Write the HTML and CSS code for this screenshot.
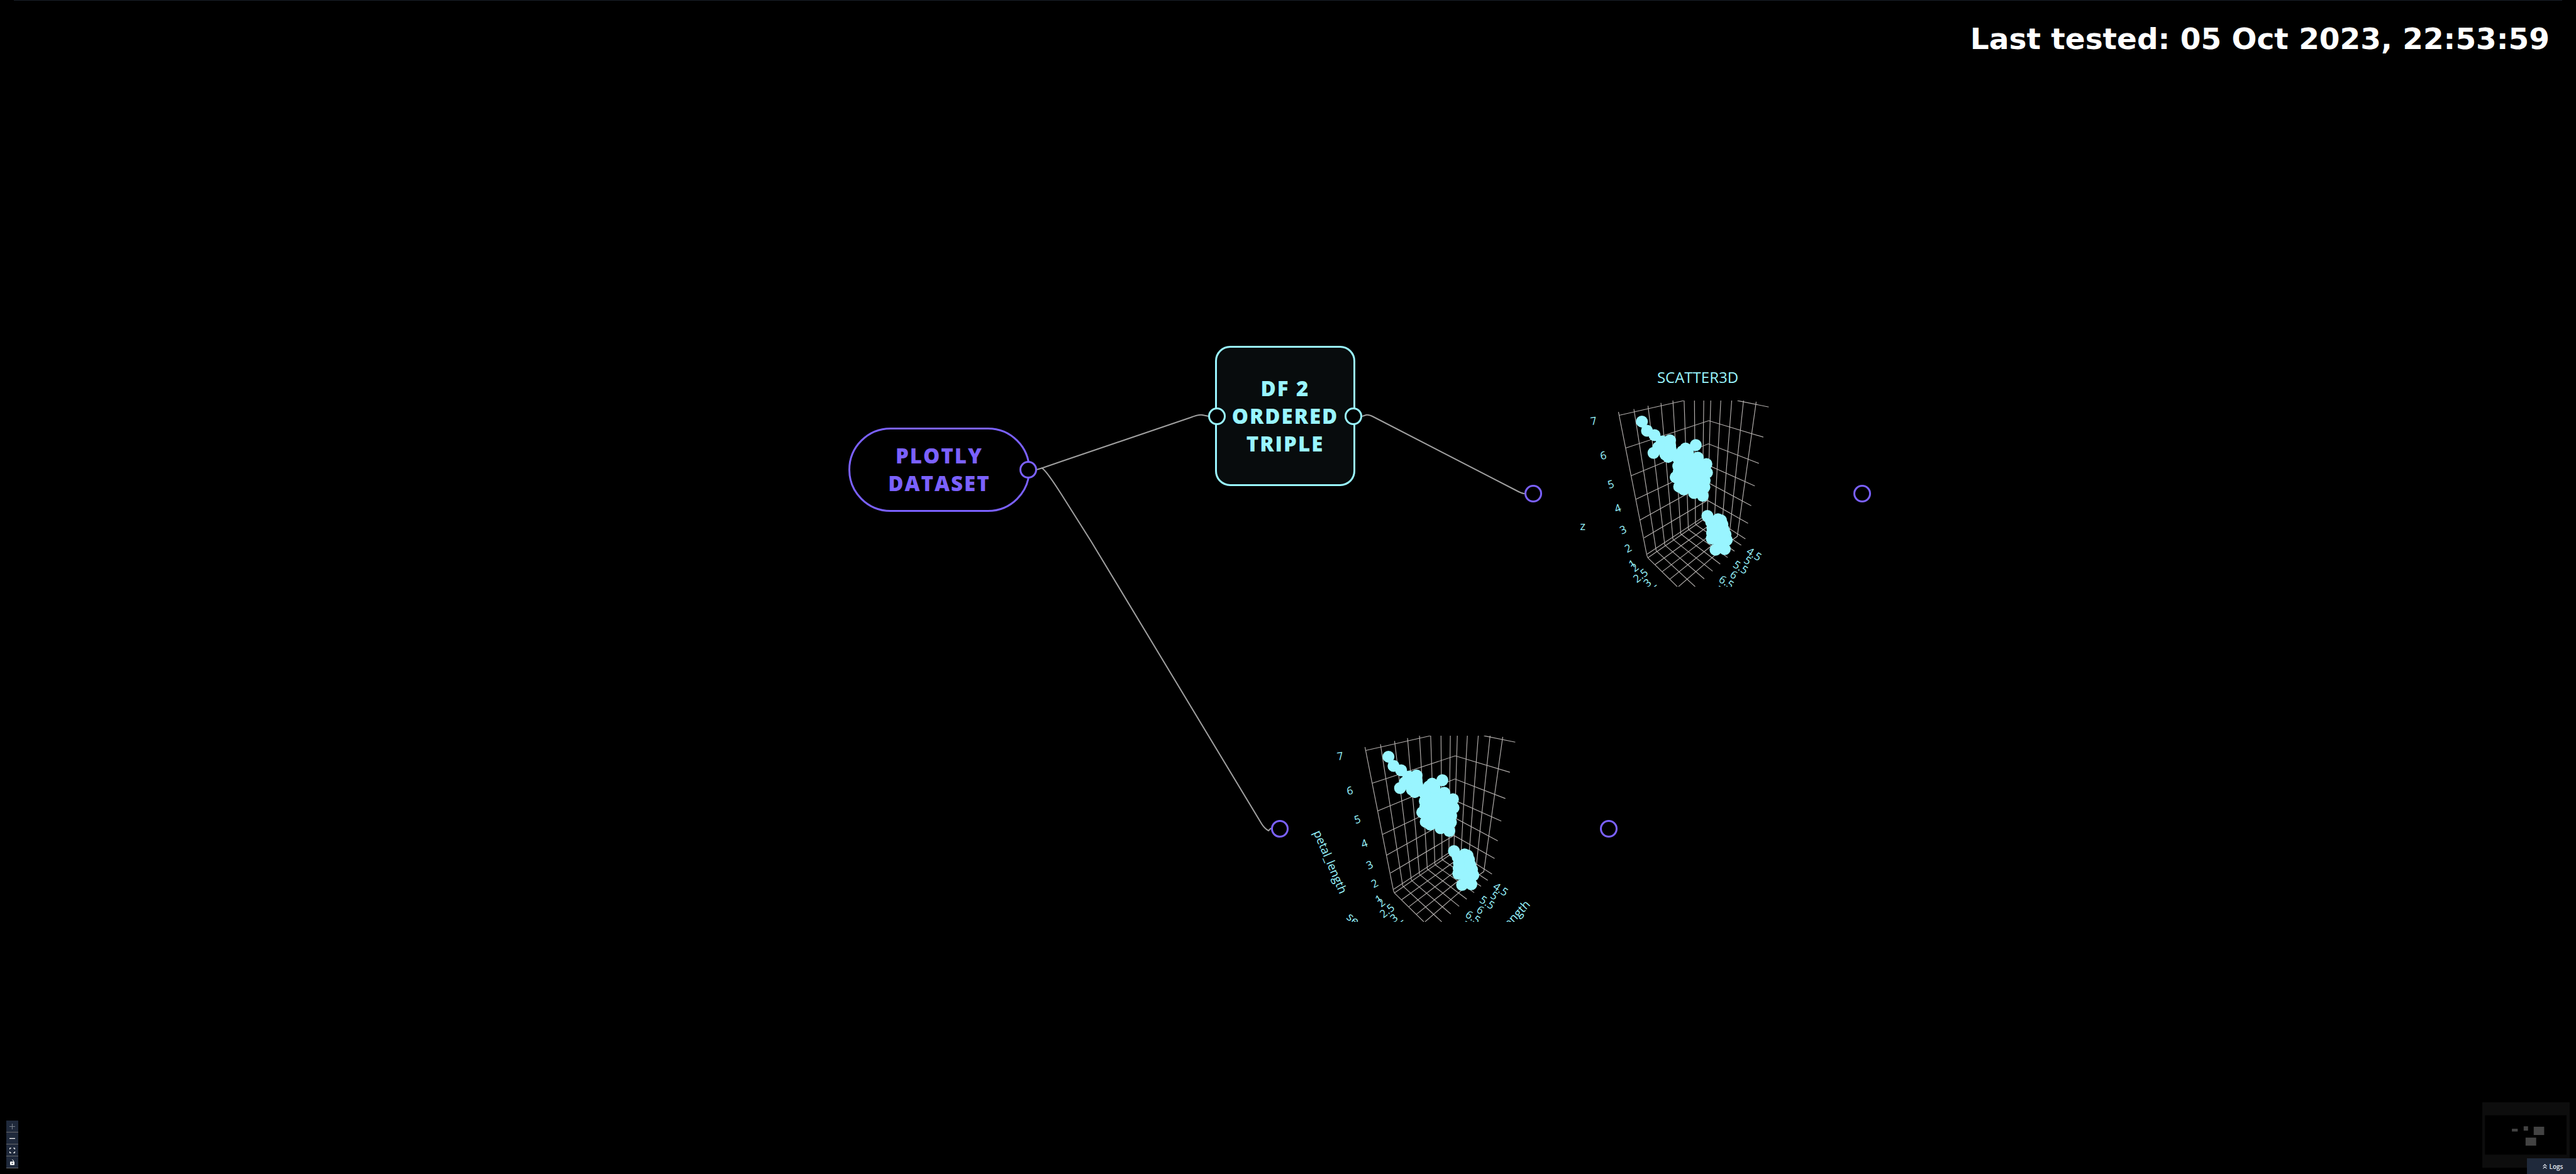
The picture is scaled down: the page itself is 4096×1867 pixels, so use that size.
FILE: index.html
```html
<!DOCTYPE html>
<html lang="en">
<head>
<meta charset="utf-8">
<title>Flow</title>
<link rel="stylesheet" href="styles.css">
</head>
<body>
<svg class="defs" aria-hidden="true">
  <defs>
    <g id="plot-grid">
      <!-- left wall -->
      <path d="M258 128L453 1112L460 1130M364 108L517 1080L523 1087M461 86L576 1040L583 1048M550 66L632 1000L638 1007M632 50L686 965L691 970M709 50L738 930L741 937M780 50L787 897L791 903M844 50L834 850"/>
      <!-- right wall -->
      <path d="M892 50L869 820M961 50L918 850M1036 50L973 860M1117 50L1023 940M1204 58L1074 983L1030 1014"/>
      <!-- height lines -->
      <path d="M262 151L709 50M1075 50L1290 94M308 376L878 188L1253 301M346 566L875 347L1222 481M378 728L873 493L1194 636M406 870L871 612L1170 772M434 992L869 735L1148 893M455 1105L867 832L1130 1000"/>
      <!-- floor -->
      <path d="M460 1130L662 1328M523 1087L785 1328M583 1048L847 1274M638 1007L905 1222M691 970L957 1173M741 937L1008 1128M791 903L1055 1084M840 873L1101 1043"/>
      <path d="M460 1130L864 852M510 1176L880 908M560 1224L880 980M612 1276L910 1037M670 1328L930 1104"/>
    </g>
    <g id="plot-points">
      <path d="M419 194L454 257L506 287L613 323L616 375L697 395L719 379L760 400L803 442L862 486L866 545L850 600L848 645L837 704L777 685L706 660L675 641L651 576L669 500L600 436L499 408L530 370L500 290Z"/>
      <path d="M869 842L942 865L965 873L980 920L993 965L1002 1008L988 1070L925 1075L899 996L900 950L895 895Z"/>
      <circle cx="419" cy="194" r="41"/><circle cx="454" cy="257" r="41"/><circle cx="506" cy="287" r="41"/>
      <circle cx="560" cy="331" r="41"/><circle cx="612" cy="323" r="41"/><circle cx="532" cy="370" r="41"/>
      <circle cx="499" cy="409" r="41"/><circle cx="580" cy="420" r="41"/><circle cx="600" cy="437" r="41"/>
      <circle cx="613" cy="360" r="41"/><circle cx="616" cy="382" r="41"/><circle cx="697" cy="398" r="41"/>
      <circle cx="719" cy="379" r="41"/><circle cx="789" cy="355" r="41"/><circle cx="735" cy="404" r="41"/>
      <circle cx="803" cy="442" r="41"/><circle cx="862" cy="486" r="41"/><circle cx="866" cy="545" r="41"/>
      <circle cx="850" cy="600" r="41"/><circle cx="848" cy="645" r="41"/><circle cx="837" cy="704" r="41"/>
      <circle cx="777" cy="685" r="41"/><circle cx="706" cy="660" r="41"/><circle cx="675" cy="641" r="41"/>
      <circle cx="651" cy="576" r="41"/><circle cx="672" cy="540" r="41"/><circle cx="669" cy="500" r="41"/>
      <circle cx="670" cy="450" r="41"/>
      <circle cx="869" cy="842" r="41"/><circle cx="942" cy="865" r="41"/><circle cx="962" cy="872" r="41"/>
      <circle cx="895" cy="885" r="41"/><circle cx="903" cy="925" r="41"/><circle cx="901" cy="960" r="41"/>
      <circle cx="899" cy="998" r="41"/><circle cx="972" cy="900" r="41"/><circle cx="980" cy="935" r="41"/>
      <circle cx="993" cy="968" r="41"/><circle cx="1002" cy="1008" r="41"/><circle cx="988" cy="1070" r="41"/>
      <circle cx="925" cy="1075" r="41"/>
    </g>
  </defs>
</svg>

<main class="flow">
  <header class="flow-header">
    <p class="last-tested">Last tested: 05 Oct 2023, 22:53:59</p>
  </header>

  <svg class="edges" aria-hidden="true">
    <path d="M1648 747L1658 744L1687 734L1893 664Q1906 659 1912 660L1922 662"/>
    <path d="M1656 744Q1662 746 1687 785L1735 861L2006 1310Q2011 1318 2017 1321L2021 1317"/>
    <path d="M2166 662L2172 660Q2176 659 2184 663L2409 779Q2420 785 2424 785"/>
  </svg>

  <section class="node node-source">
    <h2 class="node-label">PLOTLY<br>DATASET</h2>
    <span class="handle handle-out"></span>
  </section>

  <section class="node node-transform">
    <h2 class="node-label">DF 2<br>ORDERED<br>TRIPLE</h2>
    <span class="handle handle-in"></span>
    <span class="handle handle-out"></span>
  </section>

  <section class="node node-chart chart-titled">
    <h2 class="chart-title">SCATTER3D</h2>
    <svg class="plot" viewBox="-327 50 2259 1278" role="img" aria-label="Scatter3D plot">
      <use href="#plot-grid" class="grid"/>
      <use href="#plot-points" class="points"/>
      <g class="ticks">
        <text y="26" transform="translate(88 190) rotate(-10)">7</text>
        <text y="26" transform="translate(154 427) rotate(-12)">6</text>
        <text y="26" transform="translate(206 625) rotate(-16)">5</text>
        <text y="26" transform="translate(253 790) rotate(-20)">4</text>
        <text y="26" transform="translate(290 937) rotate(-24)">3</text>
        <text y="26" transform="translate(324 1064) rotate(-28)">2</text>
        <text y="26" transform="translate(352 1172) rotate(-32)">1</text>
        <text y="26" transform="translate(370 1197) rotate(-38)">2</text>
        <text y="26" transform="translate(410 1252) rotate(-38)">2.5</text>
        <text y="26" transform="translate(457 1302) rotate(-38)">3</text>
        <text y="26" transform="translate(500 1362) rotate(-38)">3.5</text>
        <text y="26" transform="translate(1190 1105) rotate(33)">4.5</text>
        <text y="26" transform="translate(1145 1148) rotate(33)">5</text>
        <text y="26" transform="translate(1097 1195) rotate(33)">5.5</text>
        <text y="26" transform="translate(1050 1247) rotate(33)">6</text>
        <text y="26" transform="translate(1000 1297) rotate(33)">6.5</text>
        <text y="26" transform="translate(950 1352) rotate(33)">7</text>
      </g>
      <g class="axis-titles">
        <text y="21" transform="translate(13 919)">z</text>
      </g>
    </svg>
    <span class="handle handle-in"></span>
    <span class="handle handle-out"></span>
  </section>

  <section class="node node-chart chart-plain">
    <svg class="plot" viewBox="-327 50 2259 1278" role="img" aria-label="Iris plot">
      <use href="#plot-grid" class="grid"/>
      <use href="#plot-points" class="points"/>
      <g class="ticks">
        <text y="26" transform="translate(88 190) rotate(-10)">7</text>
        <text y="26" transform="translate(154 427) rotate(-12)">6</text>
        <text y="26" transform="translate(206 625) rotate(-16)">5</text>
        <text y="26" transform="translate(253 790) rotate(-20)">4</text>
        <text y="26" transform="translate(290 937) rotate(-24)">3</text>
        <text y="26" transform="translate(324 1064) rotate(-28)">2</text>
        <text y="26" transform="translate(352 1172) rotate(-32)">1</text>
        <text y="26" transform="translate(370 1197) rotate(-38)">2</text>
        <text y="26" transform="translate(410 1252) rotate(-38)">2.5</text>
        <text y="26" transform="translate(457 1302) rotate(-38)">3</text>
        <text y="26" transform="translate(500 1362) rotate(-38)">3.5</text>
        <text y="26" transform="translate(1190 1105) rotate(33)">4.5</text>
        <text y="26" transform="translate(1145 1148) rotate(33)">5</text>
        <text y="26" transform="translate(1097 1195) rotate(33)">5.5</text>
        <text y="26" transform="translate(1050 1247) rotate(33)">6</text>
        <text y="26" transform="translate(1000 1297) rotate(33)">6.5</text>
        <text y="26" transform="translate(950 1352) rotate(33)">7</text>
      </g>
      <g class="axis-titles">
        <text y="21" transform="translate(13 919) rotate(67)">petal_length</text>
        <text y="21" transform="translate(310 1431) rotate(40)">sepal_width</text>
        <text y="21" transform="translate(1220 1371) rotate(-47)">sepal_length</text>
      </g>
    </svg>
    <span class="handle handle-in"></span>
    <span class="handle handle-out"></span>
  </section>

  <div class="controls">
    <button class="control" type="button" aria-label="Zoom in" disabled>
      <svg viewBox="0 0 36 36"><path d="M18 0V36M0 18H36"/></svg>
    </button>
    <button class="control" type="button" aria-label="Zoom out">
      <svg viewBox="0 0 36 36"><path d="M0 18H36" stroke-width="5"/></svg>
    </button>
    <button class="control" type="button" aria-label="Fit view">
      <svg viewBox="0 0 36 36"><path d="M2 11V6Q2 3 5 3H11M25 3H31Q34 3 34 6V11M34 25V30Q34 33 31 33H25M11 33H5Q2 33 2 30V25" stroke-width="5"/></svg>
    </button>
    <button class="control" type="button" aria-label="Lock">
      <svg viewBox="0 0 36 36"><path d="M26 17V8Q24 2 17 2" stroke-width="4"/><path class="solid" fill-rule="evenodd" d="M7 13H29Q32 13 32 16V32Q32 35 29 35H7Q4 35 4 32V16Q4 13 7 13ZM18 20A4 4 0 1 0 18 28A4 4 0 1 0 18 20Z"/></svg>
    </button>
  </div>

  <svg class="minimap" viewBox="0 0 600 450" role="img" aria-label="Mini map">
    <rect class="minimap-view" x="18" y="89" width="561" height="271"/>
    <rect x="203" y="182" width="40" height="19"/>
    <rect x="284" y="165" width="30" height="30"/>
    <rect x="353" y="168" width="72" height="57"/>
    <rect x="297" y="243" width="73" height="55"/>
  </svg>

  <button class="logs" type="button">
    <svg viewBox="0 0 30 36" aria-hidden="true"><path d="M2 17L15 4L28 17M2 33L15 20L28 33"/></svg>
    Logs
  </button>
</main>
</body>
</html>
```

FILE: styles.css
```css
:root {
  --cyan: #99f5ff;
  --purple: #7b61ff;
  --panel: #1f293b;
}

* { box-sizing: border-box; }

body {
  margin: 0;
  background: #000;
  font-family: "Open Sans", "Noto Sans", sans-serif;
}

.defs {
  position: absolute;
  width: 0;
  height: 0;
}

.flow {
  position: relative;
  min-height: 100vh;
  overflow: hidden;
}

.flow-header {
  display: flex;
  justify-content: flex-end;
  margin: 0 22px;
  padding: 34px 20px 0;
  border-top: 1px solid #1a212a;
}

.last-tested {
  margin: 0;
  color: #fff;
  font: 700 47px/54px "DejaVu Sans", sans-serif;
}

.edges {
  position: absolute;
  inset: 0;
  width: 100%;
  height: 100%;
  fill: none;
  stroke: #a0a0a0;
  stroke-width: 2;
}

/* nodes on the canvas */
.node {
  position: absolute;
  display: flex;
  flex-direction: column;
  align-items: center;
  justify-content: center;
  color: var(--accent);
}

.node-label {
  margin: 0;
  font-size: 33px;
  line-height: 44px;
  font-weight: 800;
  letter-spacing: 2px;
  text-align: center;
}

.node-source {
  --accent: var(--purple);
  left: 1349px;
  top: 680px;
  width: 289px;
  height: 134px;
  border: 3px solid var(--accent);
  border-radius: 67px;
}

.node-transform {
  --accent: var(--cyan);
  left: 1932px;
  top: 550px;
  width: 223px;
  height: 223px;
  border: 3px solid var(--accent);
  border-radius: 24px;
  background: #080c0d;
}

.node-chart {
  --accent: var(--purple);
  width: 523px;
  justify-content: flex-start;
}

.chart-titled {
  left: 2438px;
  top: 583px;
  height: 404px;
}

.chart-plain {
  left: 2035px;
  top: 1116px;
  height: 404px;
  padding-top: 54px;
}

.chart-title {
  margin: 0;
  padding-bottom: 20px;
  color: var(--cyan);
  font-size: 24px;
  line-height: 34px;
  font-weight: 400;
}

.handle {
  position: absolute;
  top: 50%;
  width: 28px;
  height: 28px;
  margin-top: -14px;
  border: 3px solid var(--accent);
  border-radius: 50%;
  background: #000;
}

.handle-in { left: -14px; }
.handle-out { right: -14px; }

/* 3D plots */
.plot {
  display: block;
  width: 523px;
  height: 296px;
  flex: none;
  overflow: hidden;
}

.grid {
  fill: none;
  stroke: #b4b0ae;
  stroke-width: 5;
}

.points { fill: var(--cyan); }

.ticks,
.axis-titles {
  fill: var(--cyan);
  text-anchor: middle;
}

.ticks { font-size: 74px; }
.axis-titles { font-size: 81px; }

/* overlays in the corners */
.controls {
  position: absolute;
  left: 10px;
  bottom: 9px;
  display: flex;
  flex-direction: column;
}

.control {
  display: flex;
  align-items: center;
  justify-content: center;
  width: 19px;
  height: 19px;
  padding: 0;
  border: 0;
  border-bottom: 1px solid #65676b;
  background: var(--panel);
}

.control svg {
  width: 9px;
  height: 9px;
  fill: none;
  stroke: #fff;
  stroke-width: 4;
}

.control:disabled svg { stroke: #7d838d; }

.control .solid {
  fill: #fff;
  stroke: none;
}

.minimap {
  position: absolute;
  right: 10px;
  bottom: 10px;
  width: 139px;
  height: 104px;
  background: #0d0d0d;
  fill: #434343;
}

.minimap-view { fill: #000; }

.logs {
  position: absolute;
  right: 0;
  bottom: 0;
  display: flex;
  align-items: center;
  justify-content: center;
  gap: 4px;
  width: 78px;
  height: 25px;
  padding: 0 0 0 4px;
  border: 0;
  background: var(--panel);
  color: #e6ebf2;
  font: 600 10px/14px "Open Sans", sans-serif;
}

.logs svg {
  width: 7px;
  height: 8px;
  fill: none;
  stroke: currentColor;
  stroke-width: 5;
}
```
